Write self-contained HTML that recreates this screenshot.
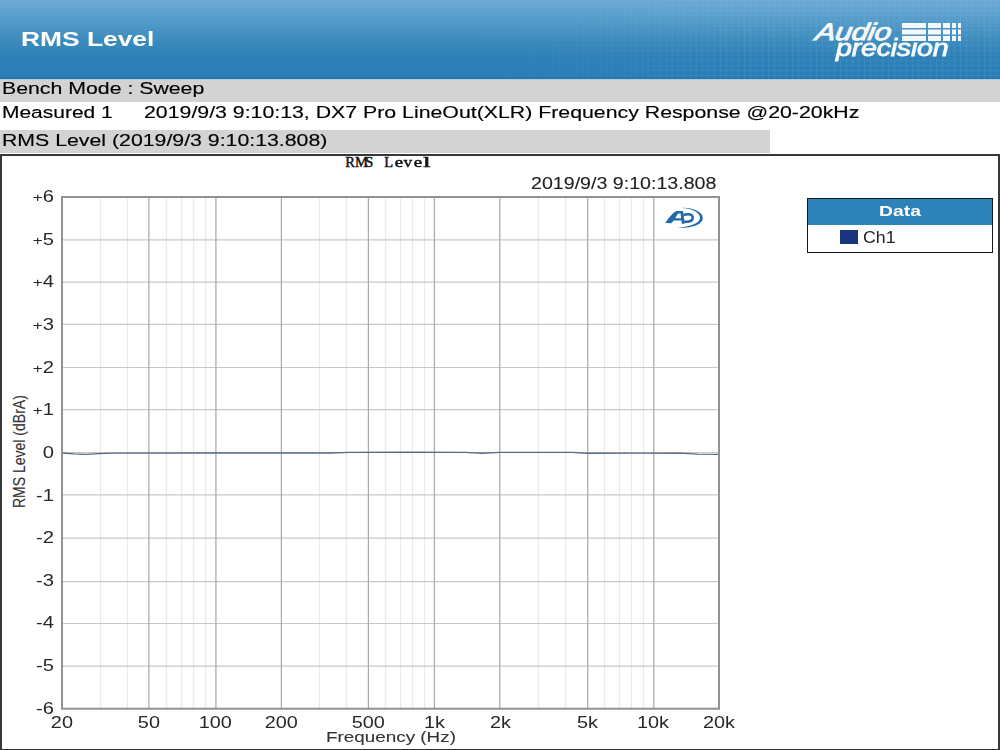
<!DOCTYPE html>
<html><head><meta charset="utf-8">
<style>
html,body{margin:0;padding:0;width:1000px;height:750px;overflow:hidden;background:#fff;}
body{position:relative;font-family:"Liberation Sans",sans-serif;}
.a{position:absolute;}
.t{position:absolute;white-space:nowrap;transform-origin:0 0;line-height:1;}
#hdr{left:0;top:0;width:1000px;height:79px;
 background:linear-gradient(to bottom,#6eaad4 0px,#5ea2cf 12px,#4b95c5 28px,#3a8abc 42px,#2e81b8 56px,#2a7eb6 77px,#2b73a6 78px,#2b73a6 79px);}
#grd{left:0;top:0;width:1000px;height:79px;opacity:1;
 background-image:repeating-linear-gradient(to right,rgba(160,210,240,.10) 0 1px,transparent 1px 6px),repeating-linear-gradient(to bottom,rgba(160,210,240,.08) 0 1px,transparent 1px 5px);
 -webkit-mask-image:linear-gradient(to right,transparent 0,transparent 45%,#000 75%,#000 100%);}
#hdrline{left:0;top:79px;width:1000px;height:1px;background:#a8cfe8;}
#row1{left:0;top:80px;width:1000px;height:22px;background:#d3d3d3;}
#row3{left:0;top:130px;width:770px;height:23px;background:#d3d3d3;}
#box{left:0;top:154px;width:996px;height:594px;border:2px solid #383838;border-bottom:none;}
#boxb{left:0;top:748.6px;width:1000px;height:1.4px;background:#303030;}
.mono span{display:inline-block;width:9.65px;text-align:center;}
.yl{position:absolute;left:0;width:54px;text-align:right;font-size:16px;line-height:18px;color:#282828;transform-origin:100% 50%;transform:scaleX(1.26);}
.xl{position:absolute;top:714.3px;width:120px;text-align:center;font-size:16px;line-height:18px;color:#282828;}
.xl span{display:inline-block;transform:scaleX(1.24);}
</style></head><body>
<div class="a" id="hdr"></div>
<div class="a" id="grd"></div>
<div class="a" id="hdrline"></div>
<div class="t" style="left:20.5px;top:28.2px;font-size:21px;font-weight:bold;color:#fff;transform:scaleX(1.255);">RMS Level</div>
<div class="t" style="left:818px;top:20px;font-size:24px;font-weight:normal;font-style:italic;color:#f6fafd;-webkit-text-stroke:0.9px #f6fafd;letter-spacing:-0.2px;transform:scaleX(1.25) skewX(-8deg);">Audio</div>
<div class="t" style="left:836px;top:37px;font-size:23px;font-weight:normal;font-style:italic;color:#f6fafd;-webkit-text-stroke:0.8px #f6fafd;letter-spacing:-0.2px;transform:scaleX(1.245);">precision</div>
<svg class="a" style="left:900px;top:21.5px" width="64" height="20" viewBox="0 0 64 20">
 <g fill="#f4f8fc">
  <rect x="2" y="1" width="24" height="5"/><rect x="28" y="1" width="13" height="5"/><rect x="43" y="1" width="7" height="5"/><rect x="52" y="1" width="4" height="5"/><rect x="58" y="1" width="3" height="5"/>
  <rect x="2" y="7.5" width="24" height="5"/><rect x="28" y="7.5" width="13" height="5"/><rect x="43" y="7.5" width="7" height="5"/><rect x="52" y="7.5" width="4" height="5"/><rect x="58" y="7.5" width="3" height="5"/>
  <rect x="2" y="14" width="24" height="5"/><rect x="28" y="14" width="13" height="5"/><rect x="43" y="14" width="7" height="5"/><rect x="52" y="14" width="4" height="5"/><rect x="58" y="14" width="3" height="5"/>
 </g>
</svg>

<div class="a" id="row1"></div>
<div class="a" id="row3"></div>
<div class="t" style="left:2px;top:81.2px;font-size:16px;color:#000;-webkit-text-stroke:0.15px #000;transform:scaleX(1.33);">Bench Mode : Sweep</div>
<div class="t" style="left:2px;top:105px;font-size:16px;color:#000;-webkit-text-stroke:0.15px #000;transform:scaleX(1.31);">Measured 1</div>
<div class="t" style="left:144px;top:105px;font-size:16px;color:#000;-webkit-text-stroke:0.15px #000;transform:scaleX(1.331);">2019/9/3 9:10:13, DX7 Pro LineOut(XLR) Frequency Response @20-20kHz</div>
<div class="t" style="left:2px;top:133px;font-size:16px;color:#000;-webkit-text-stroke:0.15px #000;transform:scaleX(1.33);">RMS Level (2019/9/3 9:10:13.808)</div>

<div class="a" id="box"></div>
<div class="a" id="boxb"></div>

<div class="t mono" style="left:345.3px;top:155px;font-family:'Liberation Serif',serif;font-size:14.5px;color:#111;-webkit-text-stroke:0.45px #111;"><span>R</span><span>M</span><span>S</span><span> </span><span>L</span><span style="transform:scaleX(1.3)">e</span><span style="transform:scaleX(1.2)">v</span><span style="transform:scaleX(1.3)">e</span><span style="transform:scaleX(1.9)">l</span></div>
<div class="t" style="left:531px;top:175.6px;font-size:15.6px;color:#222;-webkit-text-stroke:0.1px #222;transform:scaleX(1.258);">2019/9/3 9:10:13.808</div>

<svg class="a" style="left:0;top:0" width="1000" height="750">
<line x1="100.5" y1="197.0" x2="100.5" y2="708.7" stroke="#e9e9e9" stroke-width="1.3"/>
<line x1="127.5" y1="197.0" x2="127.5" y2="708.7" stroke="#e9e9e9" stroke-width="1.3"/>
<line x1="166.5" y1="197.0" x2="166.5" y2="708.7" stroke="#e9e9e9" stroke-width="1.3"/>
<line x1="181.5" y1="197.0" x2="181.5" y2="708.7" stroke="#e9e9e9" stroke-width="1.3"/>
<line x1="193.5" y1="197.0" x2="193.5" y2="708.7" stroke="#e9e9e9" stroke-width="1.3"/>
<line x1="205.5" y1="197.0" x2="205.5" y2="708.7" stroke="#e9e9e9" stroke-width="1.3"/>
<line x1="319.5" y1="197.0" x2="319.5" y2="708.7" stroke="#e9e9e9" stroke-width="1.3"/>
<line x1="346.5" y1="197.0" x2="346.5" y2="708.7" stroke="#e9e9e9" stroke-width="1.3"/>
<line x1="385.5" y1="197.0" x2="385.5" y2="708.7" stroke="#e9e9e9" stroke-width="1.3"/>
<line x1="400.5" y1="197.0" x2="400.5" y2="708.7" stroke="#e9e9e9" stroke-width="1.3"/>
<line x1="412.5" y1="197.0" x2="412.5" y2="708.7" stroke="#e9e9e9" stroke-width="1.3"/>
<line x1="424.5" y1="197.0" x2="424.5" y2="708.7" stroke="#e9e9e9" stroke-width="1.3"/>
<line x1="538.5" y1="197.0" x2="538.5" y2="708.7" stroke="#e9e9e9" stroke-width="1.3"/>
<line x1="565.5" y1="197.0" x2="565.5" y2="708.7" stroke="#e9e9e9" stroke-width="1.3"/>
<line x1="604.5" y1="197.0" x2="604.5" y2="708.7" stroke="#e9e9e9" stroke-width="1.3"/>
<line x1="619.5" y1="197.0" x2="619.5" y2="708.7" stroke="#e9e9e9" stroke-width="1.3"/>
<line x1="631.5" y1="197.0" x2="631.5" y2="708.7" stroke="#e9e9e9" stroke-width="1.3"/>
<line x1="643.5" y1="197.0" x2="643.5" y2="708.7" stroke="#e9e9e9" stroke-width="1.3"/>
<line x1="62.0" y1="666.1" x2="719.0" y2="666.1" stroke="#c8c8c8" stroke-width="1.2"/>
<line x1="62.0" y1="623.5" x2="719.0" y2="623.5" stroke="#c8c8c8" stroke-width="1.2"/>
<line x1="62.0" y1="581.6" x2="719.0" y2="581.6" stroke="#c8c8c8" stroke-width="1.2"/>
<line x1="62.0" y1="538.1" x2="719.0" y2="538.1" stroke="#c8c8c8" stroke-width="1.2"/>
<line x1="62.0" y1="494.9" x2="719.0" y2="494.9" stroke="#c8c8c8" stroke-width="1.2"/>
<line x1="62.0" y1="452.5" x2="719.0" y2="452.5" stroke="#c8c8c8" stroke-width="1.2"/>
<line x1="62.0" y1="409.6" x2="719.0" y2="409.6" stroke="#c8c8c8" stroke-width="1.2"/>
<line x1="62.0" y1="367.5" x2="719.0" y2="367.5" stroke="#c8c8c8" stroke-width="1.2"/>
<line x1="62.0" y1="324.3" x2="719.0" y2="324.3" stroke="#c8c8c8" stroke-width="1.2"/>
<line x1="62.0" y1="282.1" x2="719.0" y2="282.1" stroke="#c8c8c8" stroke-width="1.2"/>
<line x1="62.0" y1="239.8" x2="719.0" y2="239.8" stroke="#c8c8c8" stroke-width="1.2"/>
<line x1="148.9" y1="197.0" x2="148.9" y2="708.7" stroke="#aaaaaa" stroke-width="1.25"/>
<line x1="215.9" y1="197.0" x2="215.9" y2="708.7" stroke="#aaaaaa" stroke-width="1.25"/>
<line x1="281.4" y1="197.0" x2="281.4" y2="708.7" stroke="#aaaaaa" stroke-width="1.25"/>
<line x1="368.4" y1="197.0" x2="368.4" y2="708.7" stroke="#aaaaaa" stroke-width="1.25"/>
<line x1="434.4" y1="197.0" x2="434.4" y2="708.7" stroke="#aaaaaa" stroke-width="1.25"/>
<line x1="499.8" y1="197.0" x2="499.8" y2="708.7" stroke="#aaaaaa" stroke-width="1.25"/>
<line x1="587.7" y1="197.0" x2="587.7" y2="708.7" stroke="#aaaaaa" stroke-width="1.25"/>
<line x1="653.8" y1="197.0" x2="653.8" y2="708.7" stroke="#aaaaaa" stroke-width="1.25"/>
<polyline fill="none" stroke="#5a6a82" stroke-width="1.35" points="62,453.0 74,453.9 86,454.4 98,453.7 112,453.1 200,453.0 330,453.0 350,452.3 400,452.2 465,452.3 482,453.2 500,452.3 540,452.3 572,452.4 588,453.2 640,453.1 680,453.2 698,454.2 719,454.3"/>
<rect x="62.0" y="197.0" width="657.0" height="511.70000000000005" fill="none" stroke="#929292" stroke-width="2"/>
</svg>

<svg class="a" style="left:660px;top:202px" width="50" height="30" viewBox="0 0 50 30">
 <g fill="#1f68aa">
  <path d="M5.2 21 C8.5 16.2 12.8 10.5 16.6 9 L23 9 L24.8 21.8 L21.8 21.8 L21.4 18.6 L13.8 18.6 L11.2 21.2 Z M15.4 16.2 L21.1 16.2 L20.6 11.6 L18.2 11.6 C17.2 12.6 16.2 14.6 15.4 16.2 Z" fill-rule="evenodd"/>
 </g>
 <g fill="none" stroke="#1f68aa">
  <path d="M23.4 13.1 C25 12.5 26.8 12.2 28.6 12.3 C31.8 12.5 33.2 14.2 32.7 16.4 C32.2 18.6 30 19.8 26.6 19.8 L24.2 19.8" stroke-width="2.5"/>
 </g>
 <path fill="#1f68aa" d="M21 5.8 C33 5.4 42.8 9.8 42.8 16 C42.8 22.3 33 26.3 17.5 25.9 C31 24.4 39.8 21 40 16 C40.2 10.8 33 6.9 21 5.8 Z"/>
</svg>

<div class="yl" style="top:699.7px">-6</div>
<div class="yl" style="top:657.1px">-5</div>
<div class="yl" style="top:614.4px">-4</div>
<div class="yl" style="top:571.8px">-3</div>
<div class="yl" style="top:529.1px">-2</div>
<div class="yl" style="top:486.5px">-1</div>
<div class="yl" style="top:443.9px">0</div>
<div class="yl" style="top:401.2px"><span style="font-size:13.5px">+</span>1</div>
<div class="yl" style="top:358.6px"><span style="font-size:13.5px">+</span>2</div>
<div class="yl" style="top:315.9px"><span style="font-size:13.5px">+</span>3</div>
<div class="yl" style="top:273.3px"><span style="font-size:13.5px">+</span>4</div>
<div class="yl" style="top:230.6px"><span style="font-size:13.5px">+</span>5</div>
<div class="yl" style="top:188.0px"><span style="font-size:13.5px">+</span>6</div>
<div class="xl" style="left:2.0px"><span>20</span></div>
<div class="xl" style="left:89.1px"><span>50</span></div>
<div class="xl" style="left:155.1px"><span>100</span></div>
<div class="xl" style="left:221.0px"><span>200</span></div>
<div class="xl" style="left:308.1px"><span>500</span></div>
<div class="xl" style="left:374.1px"><span>1k</span></div>
<div class="xl" style="left:440.0px"><span>2k</span></div>
<div class="xl" style="left:527.1px"><span>5k</span></div>
<div class="xl" style="left:593.1px"><span>10k</span></div>
<div class="xl" style="left:659.0px"><span>20k</span></div>
<div class="t" style="left:325.5px;top:728.8px;font-size:15px;color:#333;-webkit-text-stroke:0.1px #333;transform:scaleX(1.257);">Frequency (Hz)</div>
<div class="t" style="left:10px;top:507.5px;font-size:14px;color:#333;-webkit-text-stroke:0.1px #333;transform-origin:0 0;transform:rotate(-90deg) scaleY(1.22);">RMS Level (dBrA)</div>

<div class="a" style="left:807px;top:198px;width:184px;height:52.5px;border:1.3px solid #151515;background:#fff;"></div>
<div class="a" style="left:808.3px;top:199.3px;width:184px;height:25.3px;background:#2e82ba;"></div>
<div class="t" style="left:878.5px;top:202.7px;font-size:15px;font-weight:bold;color:#fff;transform:scaleX(1.29);">Data</div>
<div class="a" style="left:840px;top:230px;width:18px;height:14px;background:#1a3580;"></div>
<div class="t" style="left:863.2px;top:230px;font-size:16px;color:#222;transform:scaleX(1.11);">Ch1</div>
</body></html>
